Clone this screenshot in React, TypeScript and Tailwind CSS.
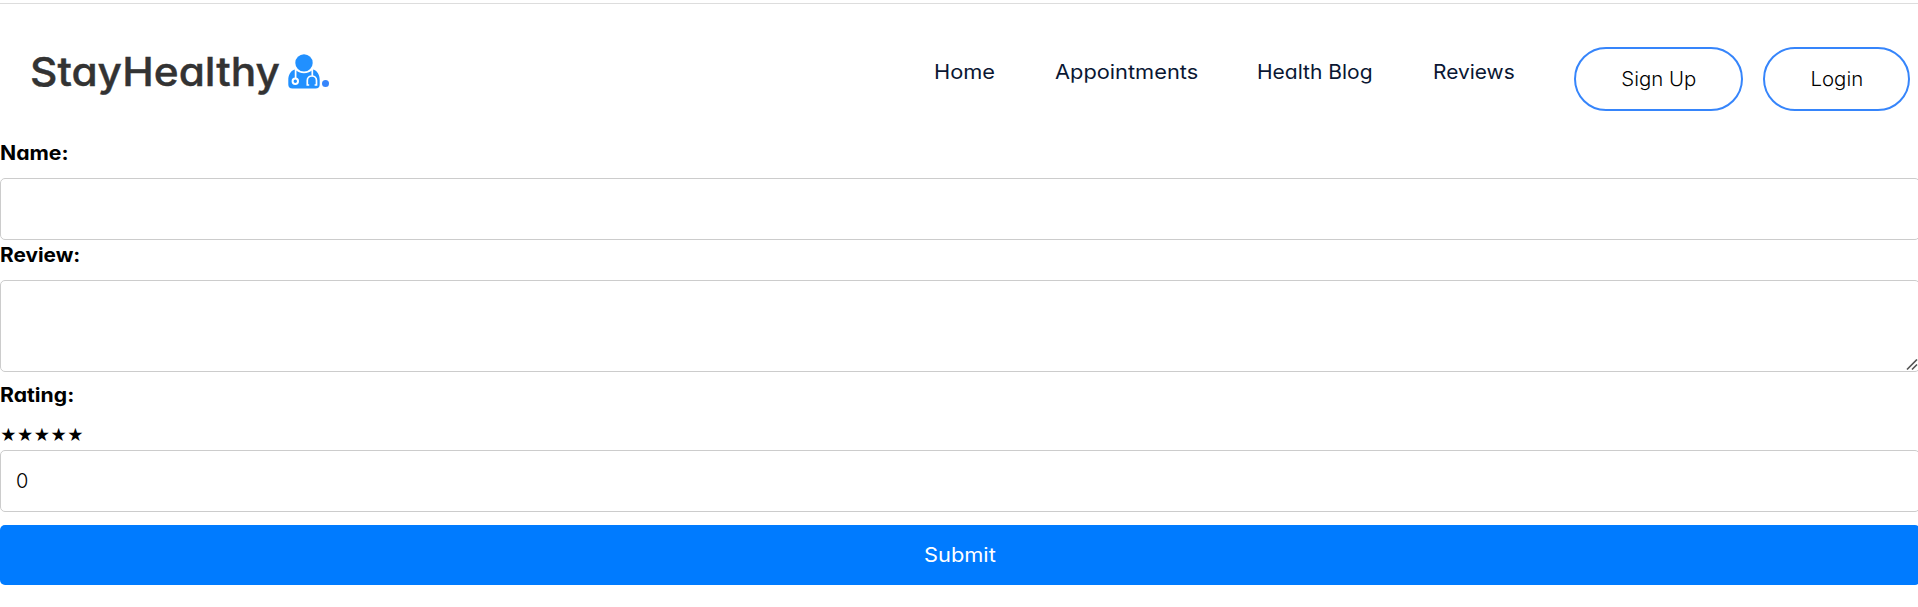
const links = [
  { label: 'Home', item: 'w-[121px]', text: 'scale-x-[1.09]' },
  { label: 'Appointments', item: 'w-[202px]', text: 'scale-x-[1.09]' },
  { label: 'Health Blog', item: 'w-[176px]', text: 'scale-x-[1.05]' },
  { label: 'Reviews', item: 'w-[141px]', text: 'scale-x-[1.045]' },
];

const label = 'mb-2.5 block h-[30px] origin-left text-xl leading-[30px] font-bold';
const field = 'block w-full rounded-[5px] border border-[#ccc] bg-white px-[15px] outline-none';
const pill = 'h-16 rounded-full border-2 border-[#3685fb] text-xl text-black';

function DoctorIcon() {
  return (
    <svg viewBox="0 0 32 35" className="mb-px ml-[22px] h-[35px] w-8" fill="none">
      <path
        fill="#2190ff"
        d="M6.500 15.500C2.500 17 .300 21 .300 26v4.500q0 4 4.200 4h23q4.200 0 4.200-4V26c0-5-2.200-9-6.200-10.500Q21 19.200 16 19.200T6.500 15.500Z"
      />
      <circle cx="16" cy="8.900" r="8.700" fill="#2190ff" />
      <g stroke="#fff" strokeWidth="1.700">
        <path d="M7.600 15v9M24.300 15v7M21.200 31h-1.900v-4.500c0-6 9.200-6 9.200 0V31h-1.900" />
        <circle cx="7.300" cy="27.300" r="2.700" strokeWidth="2" />
      </g>
    </svg>
  );
}

export default function App() {
  return (
    <div className="min-h-screen overflow-x-hidden bg-white pt-[3px] font-['Inter',sans-serif] text-black [font-feature-settings:'cv11'_1]">
      <header className="flex h-[135px] items-start justify-between border-t border-[#ddd] pr-2 pl-[30px]">
        <a className="mt-[38px] flex h-[60px] items-center text-[40px] font-medium text-[#333]">
          <span className="inline-block origin-left scale-x-[1.06] [-webkit-text-stroke:0.4px_#333]">
            StayHealthy
          </span>
          <DoctorIcon />
          <span className="mt-[22px] ml-[2px] size-[7px] rounded-full bg-[#3685fb]" />
        </a>
        <nav className="mt-[43px] flex items-start">
          <ul className="mt-[10px] flex text-xl leading-[30px] text-[#0a1733]">
            {links.map((l) => (
              <li key={l.label} className={l.item}>
                <span className={`inline-block origin-left whitespace-nowrap ${l.text}`}>
                  {l.label}
                </span>
              </li>
            ))}
          </ul>
          <button className={`${pill} mr-5 w-[169px] font-[350]`}>
            <span className="inline-block scale-x-[1.02]">Sign Up</span>
          </button>
          <button className={`${pill} w-[147px] font-[350]`}>
            <span className="inline-block scale-x-[1.02]">Login</span>
          </button>
        </nav>
      </header>
      <form className="w-[1920px]">
        <label className={`${label} scale-x-[1.06]`}>Name:</label>
        <input type="text" className={`${field} h-[62px] text-xl`} />
        <label className={`${label} scale-x-[1.04]`}>Review:</label>
        <div className="relative mb-2">
          <textarea className={`${field} h-[92px] resize-none py-3 text-xl`} />
          <svg
            viewBox="0 0 12 12"
            className="absolute right-[2px] bottom-px size-3"
            fill="none"
            stroke="#555"
            strokeWidth="1.700"
          >
            <path d="M1 10.500 11 .500M6 10.500 11 5.500" />
          </svg>
        </div>
        <label className={`${label} scale-x-[1.06]`}>Rating:</label>
        <div className="h-[30px] text-base leading-[30px]">★★★★★</div>
        <input
          type="text"
          defaultValue="0"
          className={`${field} mb-[13px] h-[62px] text-xl font-[350]`}
        />
        <button
          type="button"
          className="block h-[60px] w-full rounded-[5px] bg-[#007bff] text-xl text-white"
        >
          <span className="inline-block scale-x-[1.09]">Submit</span>
        </button>
      </form>
    </div>
  );
}
